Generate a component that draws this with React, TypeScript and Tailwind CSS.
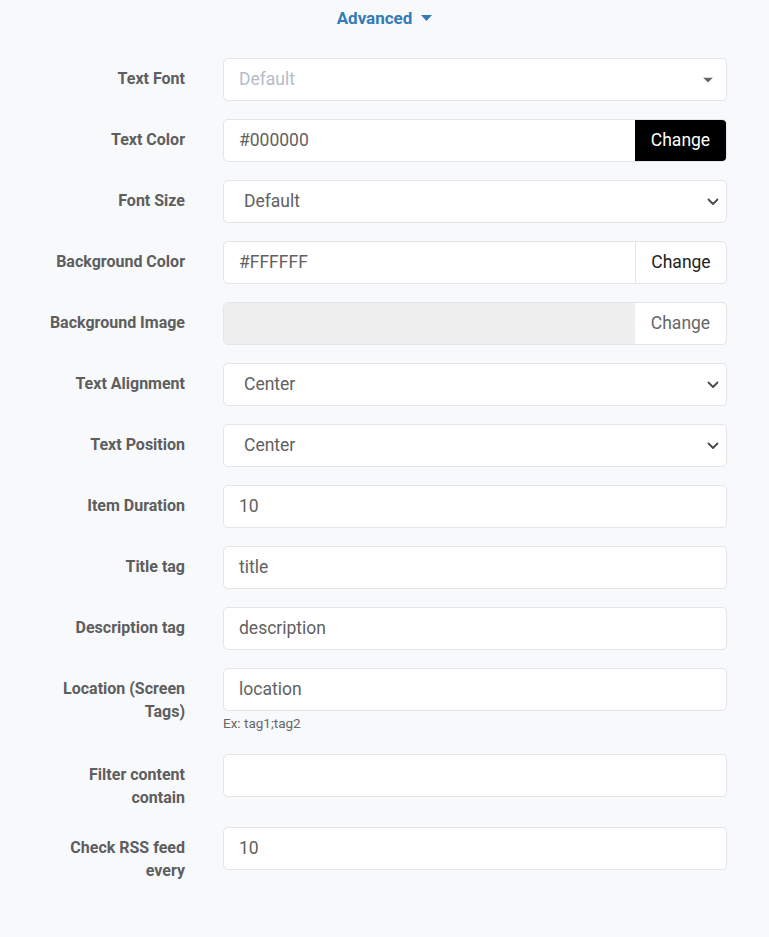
import React from "react";

const font = { fontFamily: "Roboto, 'Noto Sans', Arial, sans-serif" };

function Chevron() {
  return (
    <svg className="pointer-events-none absolute right-[7px] top-1/2 -translate-y-1/2" width="12" height="8" viewBox="0 0 12 8">
      <path d="M1.5 1.5 L6 6 L10.5 1.5" fill="none" stroke="#4a4a4a" strokeWidth="1.8" strokeLinecap="round" strokeLinejoin="round" />
    </svg>
  );
}

function Row({ label, children }: { label: string; children: React.ReactNode }) {
  return (
    <div className="flex items-start pl-[40px]">
      <div className="w-[145px] shrink-0 pt-[9px] text-right text-[16px] font-bold leading-[23px] text-[#5e5e5e]">
        {label}
      </div>
      <div className="ml-[38px] w-[504px] shrink-0">{children}</div>
    </div>
  );
}

const boxCls =
  "relative flex h-[43px] w-full items-center rounded-[5px] border border-[#e3e5e8] bg-white text-[17.5px] text-[#616161]";

function TextBox({ value }: { value: string }) {
  return (
    <div className={boxCls}>
      <span className="pl-[15px]">{value}</span>
    </div>
  );
}

function SelectBox({ value }: { value: string }) {
  return (
    <div className={boxCls}>
      <span className="pl-[20px]">{value}</span>
      <Chevron />
    </div>
  );
}

export default function App() {
  return (
    <div className="min-h-[937px] w-full bg-[#f8f9fb]" style={font}>
      <div className="flex items-center justify-center pt-[6px]">
        <span className="text-[17px] font-bold leading-[24px] text-[#337ab7]">Advanced</span>
        <svg className="ml-[9px]" width="11" height="6" viewBox="0 0 11 6">
          <path d="M0 0 L11 0 L5.5 6 Z" fill="#337ab7" />
        </svg>
      </div>

      <div className="mt-[28px] flex flex-col gap-[18px]">
        <Row label="Text Font">
          <div className={boxCls}>
            <span className="pl-[15px] text-[#b4bcc8]">Default</span>
            <svg className="absolute right-[13px] top-1/2 -translate-y-1/2" width="10" height="5" viewBox="0 0 10 5">
              <path d="M0 0 L10 0 L5 5 Z" fill="#666" />
            </svg>
          </div>
        </Row>

        <Row label="Text Color">
          <div className="flex h-[43px] w-full overflow-hidden rounded-[5px] border border-[#e3e5e8] bg-white text-[17.5px]">
            <div className="flex flex-1 items-center pl-[15px] text-[#616161]">#000000</div>
            <div className="flex w-[91px] items-center justify-center bg-black text-white">Change</div>
          </div>
        </Row>

        <Row label="Font Size">
          <SelectBox value="Default" />
        </Row>

        <Row label="Background Color">
          <div className="flex h-[43px] w-full overflow-hidden rounded-[5px] border border-[#e3e5e8] bg-white text-[17.5px]">
            <div className="flex flex-1 items-center pl-[15px] text-[#616161]">#FFFFFF</div>
            <div className="flex w-[91px] items-center justify-center border-l border-[#e3e5e8] text-[#222]">Change</div>
          </div>
        </Row>

        <Row label="Background Image">
          <div className="flex h-[43px] w-full overflow-hidden rounded-[5px] border border-[#e3e5e8] bg-white text-[17.5px]">
            <div className="flex-1 bg-[#eeeeee]"></div>
            <div className="flex w-[91px] items-center justify-center text-[#666]">Change</div>
          </div>
        </Row>

        <Row label="Text Alignment">
          <SelectBox value="Center" />
        </Row>

        <Row label="Text Position">
          <SelectBox value="Center" />
        </Row>

        <Row label="Item Duration">
          <TextBox value="10" />
        </Row>

        <Row label="Title tag">
          <TextBox value="title" />
        </Row>

        <Row label="Description tag">
          <TextBox value="description" />
        </Row>

        <Row label="Location (Screen Tags)">
          <TextBox value="location" />
          <div className="mb-[3px] mt-[2px] text-[13.5px] leading-[20px] text-[#666]">Ex: tag1;tag2</div>
        </Row>

        <Row label="Filter content contain">
          <TextBox value="" />
        </Row>

        <Row label="Check RSS feed every">
          <TextBox value="10" />
        </Row>
      </div>
    </div>
  );
}
